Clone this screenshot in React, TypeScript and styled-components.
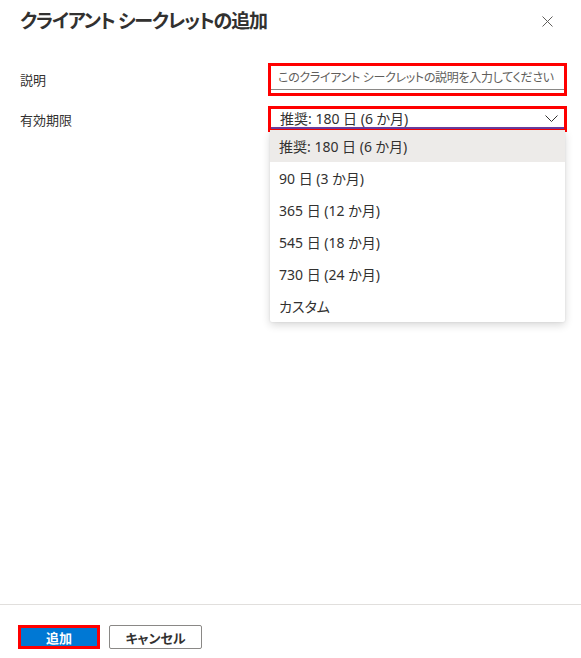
import styled, { createGlobalStyle } from "styled-components";

const GlobalStyle = createGlobalStyle`
    html, body {
        margin: 0;
        padding: 0;
        background: #fff;
    }
    body {
        font-family: "Noto Sans", "Noto Sans CJK JP", sans-serif;
        font-feature-settings: "palt";
        color: #323130;
    }
`;

const options = [
    "推奨: 180 日 (6 か月)",
    "90 日 (3 か月)",
    "365 日 (12 か月)",
    "545 日 (18 か月)",
    "730 日 (24 か月)",
    "カスタム",
];

const App = () => {
    return (
        <>
            <GlobalStyle/>
            <Panel>
                <Header>
                    <Title>クライアント シークレットの追加</Title>
                    <CloseButton aria-label="閉じる">
                        <svg width="11" height="11" viewBox="0 0 11 11">
                            <path d="M0.5 0.5 L10.5 10.5 M10.5 0.5 L0.5 10.5" stroke="#605e5c" strokeWidth="1" fill="none"/>
                        </svg>
                    </CloseButton>
                </Header>
                <Form>
                    <Row>
                        <Label>説明</Label>
                        <Highlight>
                            <TextInput placeholder="このクライアント シークレットの説明を入力してください"/>
                        </Highlight>
                    </Row>
                    <Row>
                        <Label>有効期限</Label>
                        <Highlight>
                            <Select>
                                <span>{options[0]}</span>
                                <svg width="13" height="7" viewBox="0 0 13 7">
                                    <path d="M0.5 0.5 L6.5 6.5 L12.5 0.5" stroke="#323130" strokeWidth="1" fill="none"/>
                                </svg>
                            </Select>
                            <Menu>
                                {options.map((o, i) => (
                                    <MenuItem key={o} selected={i === 0}>{o}</MenuItem>
                                ))}
                            </Menu>
                        </Highlight>
                    </Row>
                </Form>
                <Spacer/>
                <Footer>
                    <PrimaryButton>追加</PrimaryButton>
                    <DefaultButton>キャンセル</DefaultButton>
                </Footer>
            </Panel>
        </>
    );
}

export default App;

const Panel = styled.div`
    width: 581px;
    height: 658px;
    display: flex;
    flex-direction: column;
    box-sizing: border-box;
`

const Header = styled.div`
    display: flex;
    justify-content: space-between;
    align-items: center;
    padding: 6px 27px 0 20px;
    height: 30px;
`

const Title = styled.div`
    font-size: 19px;
    font-weight: 700;
    color: #323130;
    letter-spacing: -1.2px;
    line-height: 30px;
`

const CloseButton = styled.div`
    display: flex;
    align-items: center;
    justify-content: center;
    width: 14px;
    height: 14px;
`

const Form = styled.div`
    display: flex;
    flex-direction: column;
    gap: 10px;
    padding-top: 27px;
`

const Row = styled.div`
    display: grid;
    grid-template-columns: 1fr 299px;
    align-items: center;
    padding: 0 14px 0 20px;
`

const Label = styled.div`
    font-size: 13px;
    color: #323130;
`

const Highlight = styled.div`
    position: relative;
    border: 3px solid #ff0000;
    background: #fff;
`

const TextInput = styled.input`
    display: block;
    box-sizing: border-box;
    width: 100%;
    height: 24px;
    margin-bottom: 3px;
    padding: 0 7px;
    border: none;
    border-bottom: 1px solid #8a8886;
    outline: none;
    font-family: inherit;
    font-feature-settings: "palt";
    font-size: 12px;
    letter-spacing: -0.3px;
    color: #323130;
    &::placeholder {
        color: #605e5c;
    }
`

const Select = styled.div`
    display: flex;
    align-items: center;
    justify-content: space-between;
    box-sizing: border-box;
    height: 20px;
    padding: 0 6px 0 9px;
    border-bottom: 2px solid #6b3fa0;
    font-size: 14px;
    color: #323130;
`

const Menu = styled.div`
    position: absolute;
    top: calc(100% + 1px);
    left: -1px;
    width: 295px;
    background: #fff;
    border-radius: 2px;
    box-shadow: 0 3px 8px rgba(0, 0, 0, 0.16), 0 0 2px rgba(0, 0, 0, 0.1);
    z-index: 10;
`

const MenuItem = styled.div<{ selected?: boolean }>`
    display: flex;
    align-items: center;
    height: 32px;
    padding-left: 9px;
    font-size: 14px;
    color: #323130;
    background: ${p => p.selected ? "#edebe9" : "transparent"};
`

const Spacer = styled.div`
    flex: 1;
`

const Footer = styled.div`
    display: flex;
    align-items: flex-start;
    gap: 9px;
    height: 54px;
    padding: 20px 0 0 18px;
    border-top: 1px solid #e1dfdd;
    box-sizing: border-box;
`

const PrimaryButton = styled.div`
    display: flex;
    align-items: center;
    justify-content: center;
    box-sizing: border-box;
    width: 82px;
    height: 24px;
    border: 3px solid #ff0000;
    background: #0078d4;
    color: #fff;
    font-size: 13px;
    font-weight: 700;
`

const DefaultButton = styled.div`
    display: flex;
    align-items: center;
    justify-content: center;
    box-sizing: border-box;
    width: 93px;
    height: 24px;
    border: 1px solid #8a8886;
    border-radius: 2px;
    background: #fff;
    color: #323130;
    font-size: 13px;
    font-weight: 700;
`
